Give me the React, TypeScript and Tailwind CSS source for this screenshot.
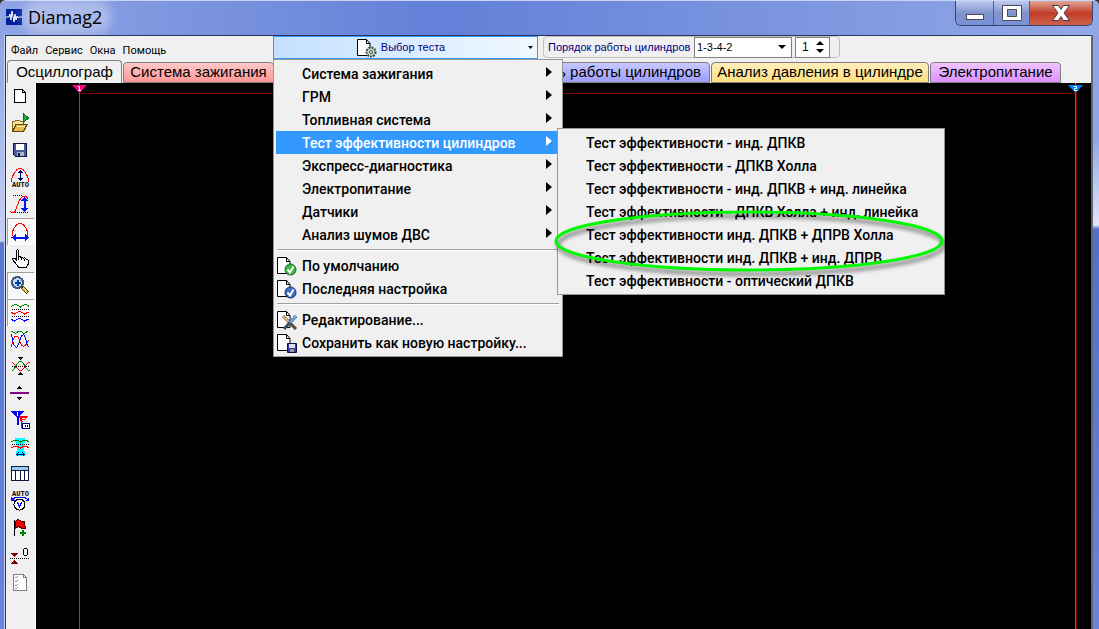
import { useState } from 'react';
import type { ReactNode } from 'react';

type Tool = {
  label: string;
  icon: ReactNode;
};

type MenuEntry = {
  label: string;
  icon?: ReactNode;
};

const Auto = ({ y }: { y: number }) => (
  <text x="13.5" y={y} textAnchor="middle" fontSize="7" fontWeight="700" fontFamily="Liberation Mono, monospace" fill="#000">AUTO</text>
);

const dots = { stroke: '#000', strokeDasharray: '1 1', fill: 'none' };

const tools: Tool[] = [
  {
    label: 'Новый',
    icon: <path d="M7.5 6.5h8l3 3v10h-11zM15.5 6.5v3h3" fill="#fff" stroke="#000" />,
  },
  {
    label: 'Открыть',
    icon: (
      <>
        <path d="M5.5 21V11.5h2l1-1h4l1 1h3V15" fill="#f5e6a0" stroke="#8a6914" />
        <path d="M5.5 21.5l3.5-7h11l-3.5 7z" fill="#e8b94a" stroke="#5c4a10" />
        <path d="M10 16h8" stroke="#fff3c0" />
        <path d="M16.5 3.5v9l5-4.5z" fill="#10b030" stroke="#06701a" />
      </>
    ),
  },
  {
    label: 'Сохранить',
    icon: (
      <>
        <path d="M6.5 6.5h13v13h-11l-2-2z" fill="#4a5a9c" stroke="#101838" />
        <path d="M9 7h8v6H9z" fill="#fff" />
        <path d="M10 15h7v4h-7z" fill="#aab4c8" />
        <path d="M11 16h2v3h-2z" fill="#101838" />
      </>
    ),
  },
  {
    label: 'Авто по вертикали',
    icon: (
      <>
        <path d="M4.5 17.5c0-5 3-9 5-11.5 2-2 5-2 7 0 2 2.500 5 6.500 5 11.500" fill="none" stroke="#f00" />
        <path d="M13.500 6v11" stroke="#00007f" />
        <path d="M11 9l2.500-3.500L16 9zM11 14l2.500 3.500L16 14z" fill="#00007f" />
        <Auto y={23} />
      </>
    ),
  },
  {
    label: 'Размах',
    icon: (
      <>
        <path d="M6 4.5h10M8 21.5h13" {...dots} />
        <path d="M3.5 20.5c2 2 4 2 5-1 2-5 3-10 6-13 2-2 5-2 7 2" fill="none" stroke="#f00" />
        <path d="M17.5 7v13" stroke="#0018f0" strokeWidth="2" />
        <path d="M14 10l3.5-4.5L21 10zM14 17l3.5 4.5L21 17z" fill="#0018f0" />
      </>
    ),
  },
  {
    label: 'Развёртка',
    icon: (
      <>
        <path d="M5 18c0-6 2-8 4-10.5 2-2.5 6-2.5 8 0 2 2.5 4 4.5 4 10.5" fill="none" stroke="#f00" />
        <path d="M6 19.5h15" stroke="#0018f0" strokeWidth="2" />
        <path d="M9 16l-4.5 3.5L9 23zM18 16l4.5 3.5L18 23z" fill="#0018f0" />
      </>
    ),
  },
  {
    label: 'Рука',
    icon: (
      <path d="M9.5 15V5.5q1-1.5 2 0V12q1.5-1 2.5.5 1.5-.8 2.5.7 2-.7 2.5 1 2-.5 2.5 1.5v3l-2 3.5h-8l-2.5-3.5-3.5-4q0-2 2-1.500zM11.5 12v3M14.5 13v2M17 13.5v2" fill="#fff" stroke="#000" />
    ),
  },
  {
    label: 'Лупа',
    icon: (
      <>
        <path d="M15 15l6 6" stroke="#4a3800" strokeWidth="4" />
        <path d="M16 16l4.5 4.5" stroke="#e8c860" strokeWidth="2" />
        <circle cx="10.5" cy="10.5" r="5.5" fill="#b8dcff" stroke="#4a5a78" strokeWidth="2" />
        <path d="M10.5 7.5v6M7.5 10.5h6" stroke="#0a3ca0" strokeWidth="2" />
      </>
    ),
  },
  {
    label: 'Раздельные каналы',
    icon: (
      <>
        <path d="M4.5 7.500l3-2h2l4 2.500 4-2.500h2l2.500 2" fill="none" stroke="#008000" />
        <path d="M5 10.5h17M5 17.5h17" {...dots} />
        <path d="M4.5 13.5l3 1.5 4-2.5h2l4 2.5 4-2" fill="none" stroke="#f00" />
        <path d="M4.5 20.5l3 1.5 4-2.5h2l4 2.5 4-2" fill="none" stroke="#00f" />
      </>
    ),
  },
  {
    label: 'Совмещённые каналы',
    icon: (
      <>
        <path d="M4.5 5l4 2.5 2.5-2h3l3 2 4-2.5" fill="none" stroke="#008000" />
        <path d="M4.5 21c1-7 3-11 5-11s3 5 4.5 8 4 4 7.5-4" fill="none" stroke="#f00" />
        <path d="M4.5 8c1 8 3 13 5 13s3-7 4.5-10 3-3 4 0 2 8 3.5 10" fill="none" stroke="#00f" />
      </>
    ),
  },
  {
    label: 'Центрировать',
    icon: (
      <>
        <path d="M10.5 4h6l-3 3zM10.5 22h6l-3-3z" fill="#000" />
        <path d="M4.5 17.5c4 0 5-9 9-9s5 9 9 9" fill="none" stroke="#008000" />
        <path d="M4.5 9.5c4 0 5 8 9 8s5-8 9-8" fill="none" stroke="#f00" />
        <path d="M5 13.5h17" {...dots} />
      </>
    ),
  },
  {
    label: 'Линия',
    icon: (
      <>
        <path d="M10 9h5l-2.5-3zM10 17h5l-2.5 3z" fill="#000" />
        <path d="M3 13h19" stroke="#800080" strokeWidth="2" />
      </>
    ),
  },
  {
    label: 'Маркеры',
    icon: (
      <>
        <path d="M12 9h9l-6 6v6h-1v-6z" fill="#f00" />
        <path d="M4 4h13l-5.5 6v8h-2v-8z" fill="#00f" />
        <path d="M10.500 5v4M15 11h3M15 13h2" stroke="#fff" />
        <path d="M15.5 16.5h7v5h-7z" fill="#fff" stroke="#00007f" />
        <path d="M18.5 18v2M20.5 18v2" stroke="#00007f" />
      </>
    ),
  },
  {
    label: 'Участок',
    icon: (
      <>
        <path d="M8 4h10v3l-1 5 1 10H9l1-10-2-5z" fill="#0ff" />
        <path d="M4.5 8l3-2h3l3 2 3-2h3l2 2" fill="none" stroke="#008000" />
        <path d="M5 10.5h17" {...dots} />
        <path d="M4.5 14l3-2h2l4 2 4-2h2l2 2" fill="none" stroke="#f00" />
        <path d="M10 20.5h7M11.5 18.5l-2 2 2 2M15.5 18.5l2 2-2 2" fill="none" stroke="#00007f" />
      </>
    ),
  },
  {
    label: 'Таблица',
    icon: (
      <>
        <path d="M4.5 5.5h17v14h-17z" fill="#fff" stroke="#10183c" />
        <path d="M5 6h16v3H5z" fill="#9cc8f4" />
        <path d="M5 9.5h16M8.5 9v10M13 9v10M17.5 9v10" stroke="#10183c" />
      </>
    ),
  },
  {
    label: 'Авто вольтметр',
    icon: (
      <>
        <Auto y={8} />
        <path d="M5 12c2-3 5-3 8-3s6 0 8 3" fill="none" stroke="#00f" />
        <path d="M4 9v4h4zM22 9v4h-4z" fill="#00f" />
        <circle cx="12.5" cy="16.5" r="5.5" fill="#fff" stroke="#000" />
        <path d="M10.5 14.5l2 4 2-4" fill="none" stroke="#00f" />
      </>
    ),
  },
  {
    label: 'Добавить флаг',
    icon: (
      <>
        <path d="M7.5 5v16" stroke="#000" />
        <path d="M8 6.5l3-2 3 1.5h3l1.5 7h-4l-3-1.5-3.5 2z" fill="#f00000" stroke="#500" />
        <path d="M16 15v6M13 18h6" stroke="#008000" strokeWidth="2" />
      </>
    ),
  },
  {
    label: 'Ноль',
    icon: (
      <>
        <path d="M4 11h7l-3.5 4zM4 22h7l-3.5-4z" fill="#800000" />
        <path d="M3 16.5h19" {...dots} />
        <rect x="16.5" y="6.5" width="4" height="7" rx="2" fill="none" stroke="#000" />
      </>
    ),
  },
  {
    label: 'Список',
    icon: (
      <>
        <path d="M6.5 5.5h10l3 3v13h-13zM16.5 5.5v3h3" fill="#fff" stroke="#808080" />
        <path d="M8 8l1 1 2-2M8 12l1 1 2-2M8 16l1 1 2-2M8 19l1 1 2-2" fill="none" stroke="#909090" />
      </>
    ),
  },
];

const pressedTools = ['Развёртка', 'Лупа', 'Раздельные каналы'];

const Page = ({ children }: { children: ReactNode }) => (
  <svg width="20" height="20" viewBox="0 0 20 20" className="shrink-0" aria-hidden="true">
    <path d="M.5 1.5h9l3.5 4v12H.5z" fill="#fff" stroke="#000" />
    <path d="M9.5 1.5v4H13" fill="none" stroke="#000" />
    {children}
  </svg>
);

const testMenu: MenuEntry[] = [
  { label: 'Система зажигания' },
  { label: 'ГРМ' },
  { label: 'Топливная система' },
  { label: 'Тест эффективности цилиндров' },
  { label: 'Экспресс-диагностика' },
  { label: 'Электропитание' },
  { label: 'Датчики' },
  { label: 'Анализ шумов ДВС' },
];

const presetMenu: MenuEntry[] = [
  {
    label: 'По умолчанию',
    icon: (
      <Page>
        <circle cx="13.5" cy="13.5" r="5.5" fill="#3cb83c" stroke="#20603a" />
        <path d="M10.5 13.5l2.5 3 3.5-6" fill="none" stroke="#fff" strokeWidth="2" />
      </Page>
    ),
  },
  {
    label: 'Последняя настройка',
    icon: (
      <Page>
        <circle cx="13.5" cy="13.5" r="5.5" fill="#3c70c8" stroke="#1c2c58" />
        <path d="M10.5 13.5l2.5 3 3.5-6" fill="none" stroke="#fff" strokeWidth="2" />
      </Page>
    ),
  },
];

const editMenu: MenuEntry[] = [
  {
    label: 'Редактирование...',
    icon: (
      <Page>
        <path d="M6 6l13 13" stroke="#5a4830" strokeWidth="3" />
        <path d="M6 6l6 6" stroke="#e0b878" strokeWidth="2" />
        <path d="M19 6L7 19" stroke="#38506c" strokeWidth="3" />
        <path d="M19 6l-6 6.5" stroke="#68b0f0" strokeWidth="2" />
      </Page>
    ),
  },
  {
    label: 'Сохранить как новую настройку...',
    icon: (
      <Page>
        <path d="M10.5 10.5h9v9h-9z" fill="#3c3ca0" stroke="#10103c" />
        <path d="M12 11h6v4h-6z" fill="#dde" />
        <path d="M13 16h4v3h-4z" fill="#99a" />
      </Page>
    ),
  },
];

const efficiencyTests = [
  'Тест эффективности - инд. ДПКВ',
  'Тест эффективности - ДПКВ Холла',
  'Тест эффективности - инд. ДПКВ + инд. линейка',
  'Тест эффективности - ДПКВ Холла + инд. линейка',
  'Тест эффективности инд. ДПКВ + ДПРВ Холла',
  'Тест эффективности инд. ДПКВ + инд. ДПРВ',
  'Тест эффективности - оптический ДПКВ',
];

const tabs = [
  { label: 'Система зажигания', style: 'from-[#ffc8c8] to-[#ff9696] w-[151px] justify-center' },
  { label: 'Неравномерность работы цилиндров', style: 'from-[#c8c8ff] to-[#9c9cfc] w-[435px] justify-end px-2' },
  { label: 'Анализ давления в цилиндре', style: 'from-[#ffeebc] to-[#ffdf80] w-[218px] justify-center' },
  { label: 'Электропитание', style: 'from-[#f0c4ff] to-[#dc90ff] w-[131px] justify-center' },
];

function Separator() {
  return <li role="separator" className="mx-px flex h-2 items-center"><div className="h-0.5 w-full border-t border-[#a0a0a0] bg-white"></div></li>;
}

function IconEntries({ entries }: { entries: MenuEntry[] }) {
  return entries.map((entry) => (
    <li key={entry.label}>
      <button type="button" className="flex h-[23px] w-full items-center gap-[5px] pl-px text-left">
        {entry.icon}
        {entry.label}
      </button>
    </li>
  ));
}

function SubMenu() {
  return (
    <div className="absolute -top-[3px] left-[281px] z-20 w-[388px] border border-[#979797] bg-[#f0f0f0] py-0.5 text-black">
      <ul>
        {efficiencyTests.map((test) => (
          <li key={test}>
            <button type="button" className="flex h-[23px] w-full items-center pl-7 text-left whitespace-nowrap">{test}</button>
          </li>
        ))}
      </ul>
      <svg width="404" height="76" viewBox="0 0 404 76" className="pointer-events-none absolute top-[75px] -left-2 drop-shadow-[2px_4px_2px_rgba(0,0,0,0.55)]" aria-hidden="true">
        <ellipse cx="199" cy="37" rx="193" ry="29" fill="none" stroke="#00f800" strokeWidth="3" />
      </svg>
    </div>
  );
}

function TestMenu() {
  const [selected, setSelected] = useState('Тест эффективности цилиндров');

  return (
    <ul className="absolute top-[23px] left-0 z-10 w-[290px] border border-[#979797] bg-[#f0f0f0] p-0.5 font-['Roboto',sans-serif] text-sm font-medium text-black">
      {testMenu.map((entry) => (
        <li key={entry.label} className="relative">
          <button
            type="button"
            onClick={() => setSelected(entry.label)}
            className={`flex h-[23px] w-full items-center justify-between pr-2 pl-[26px] text-left ${
              selected === entry.label ? 'bg-[#3399ff] text-white' : ''
            }`}
          >
            {entry.label}
            <svg width="6" height="10" viewBox="0 0 6 10" className="mb-1" aria-hidden="true"><path d="M0 0l6 5-6 5z" fill="currentColor" /></svg>
          </button>
          {selected === entry.label && <SubMenu />}
        </li>
      ))}
      <Separator />
      <IconEntries entries={presetMenu} />
      <Separator />
      <IconEntries entries={editMenu} />
    </ul>
  );
}

function TitleBar() {
  return (
    <header className="flex h-[35px] items-start justify-between rounded-t-md border-t border-[#c8d4f8] bg-linear-to-r from-[#8fa4e4] via-[#6280d8] via-40% to-[#93a8e6]">
      <div className="flex h-8 items-center gap-1.5 pl-1.5">
        <svg width="16" height="16" viewBox="0 0 16 16" aria-hidden="true">
          <path d="M0 0h16v16H0z" fill="#00209c" />
          <path d="M0 8h3l1-3 1 6 1-9 2 11 1-8 1 6 1-4 1 2 1-1h3" fill="none" stroke="#fff" />
        </svg>
        <h1 className="rounded-full bg-white/30 pr-1 font-['Open_Sans',sans-serif] text-lg leading-6 text-black shadow-[0_0_10px_6px_rgba(255,255,255,0.3)]">Diamag2</h1>
      </div>
      <div className="mr-1.5 flex h-[25px] overflow-hidden rounded-b-md border border-t-0 border-[#38446c]">
        <button type="button" aria-label="Свернуть" className="flex w-[38px] items-center justify-center border-r border-[#4c5c90] bg-linear-to-b from-[#c0ccf0] via-[#8094cc] via-50% to-[#7890d8]">
          <svg width="20" height="8" viewBox="0 0 20 8" className="mt-2" aria-hidden="true"><rect x="1.5" y="1.5" width="17" height="5" fill="#fff" stroke="#4a4a58" /></svg>
        </button>
        <button type="button" aria-label="Развернуть" className="flex w-9 items-center justify-center border-r border-[#4c5c90] bg-linear-to-b from-[#c0ccf0] via-[#8094cc] via-50% to-[#7890d8]">
          <svg width="20" height="16" viewBox="0 0 20 16" aria-hidden="true"><path d="M.5.5h19v15H.5zM5.5 4.5v7h9v-7z" fill="#fff" fillRule="evenodd" stroke="#4a4a58" /></svg>
        </button>
        <button type="button" aria-label="Закрыть" className="flex w-[62px] items-center justify-center bg-linear-to-b from-[#e0a498] from-0% via-[#c03c28] via-50% to-[#d06048]">
          <svg width="18" height="16" viewBox="0 0 18 16" aria-hidden="true"><path d="M.5.5h6L9 4.5l2.5-4h6L12 8l5.5 7.5h-6L9 11.5l-2.5 4h-6L6 8z" fill="#fff" stroke="#4a3c48" /></svg>
        </button>
      </div>
    </header>
  );
}

function TopBar() {
  return (
    <div className="flex h-6 bg-[#f0f0f0]">
      <nav className="flex w-[267px] shrink-0 items-end gap-[7px] pb-px pl-[5px] font-['Roboto',sans-serif] text-[11px] leading-4 text-black">
        <a href="#file">Файл</a>
        <a href="#service">Сервис</a>
        <a href="#windows">Окна</a>
        <a href="#help">Помощь</a>
      </nav>
      <div className="relative h-[23px] w-[265px] shrink-0">
        <button type="button" className="flex h-full w-full items-center border border-[#3399ff] bg-linear-to-r from-[#c4e0ff] to-[#f0f8ff] pr-1 font-['Liberation_Sans',sans-serif] text-[11px] text-[#000080]">
          <span className="flex flex-1 items-center justify-center gap-1">
            <Page>
              <circle cx="14" cy="14" r="4.5" fill="#c8d8c8" stroke="#405040" strokeWidth="2" strokeDasharray="2 1" />
              <circle cx="14" cy="14" r="1.5" fill="#fff" stroke="#405040" />
            </Page>
            Выбор теста
          </span>
          <svg width="5" height="3" viewBox="0 0 5 3" aria-hidden="true"><path d="M0 0h5L2.5 3z" /></svg>
        </button>
        <TestMenu />
      </div>
      <div className="ml-[5px] flex h-[22px] w-[297px] items-center rounded-sm border border-[#c0c0c0] pl-1 font-['Liberation_Sans',sans-serif] text-[11px] text-[#000080]">
        <label htmlFor="firing-order" className="w-[146px] shrink-0 whitespace-nowrap">Порядок работы цилиндров</label>
        <div className="relative">
          <select id="firing-order" className="block h-[21px] w-[98px] appearance-none border border-[#808080] bg-white pl-0.5 text-[11px] text-black">
            <option>1-3-4-2</option>
            <option>1-2-4-3</option>
          </select>
          <svg width="8" height="4" viewBox="0 0 8 4" className="pointer-events-none absolute top-2 right-1.5" aria-hidden="true"><path d="M0 0h8L4 4z" fill="#000" /></svg>
        </div>
        <div className="ml-[3px] flex h-[21px] w-[35px] items-center border border-[#808080] bg-white">
          <input aria-label="Цилиндр" inputMode="numeric" defaultValue="1" className="w-5 pl-1.5 text-xs text-black" />
          <div className="flex flex-col gap-1">
            <button type="button" aria-label="Больше" className="block"><svg width="8" height="4" viewBox="0 0 8 4"><path d="M0 4h8L4 0z" fill="#000" /></svg></button>
            <button type="button" aria-label="Меньше" className="block"><svg width="8" height="4" viewBox="0 0 8 4"><path d="M0 0h8L4 4z" fill="#000" /></svg></button>
          </div>
        </div>
      </div>
    </div>
  );
}

function TabBar() {
  return (
    <div role="tablist" className="flex h-[23px] items-end gap-px overflow-hidden bg-[#f0f0f0] pl-px font-['Liberation_Sans',sans-serif] text-[15px] text-black">
      <button type="button" role="tab" aria-selected="true" className="flex h-[23px] w-[115px] shrink-0 items-center justify-center rounded-t border border-b-0 border-[#808080]">Осциллограф</button>
      {tabs.map((tab) => (
        <button
          key={tab.label}
          type="button"
          role="tab"
          aria-selected="false"
          className={`flex h-[21px] shrink-0 items-center rounded-t border border-[#808080] bg-linear-to-b whitespace-nowrap ${tab.style}`}
        >
          {tab.label}
        </button>
      ))}
    </div>
  );
}

function ToolBar() {
  return (
    <div role="toolbar" className="flex w-[30px] shrink-0 flex-col items-start border-r border-white bg-[#f0f0f0] pl-px">
      {tools.map((tool) => (
        <button
          key={tool.label}
          type="button"
          aria-label={tool.label}
          className={`h-[27px] w-[27px] ${
            pressedTools.includes(tool.label) ? 'bg-[#f8f8f8] shadow-[inset_1px_1px_0_#a0a0a0,inset_-1px_-1px_0_#ffffff]' : ''
          }`}
        >
          <svg width="27" height="27" viewBox="0 0 27 27" shapeRendering="crispEdges" aria-hidden="true">{tool.icon}</svg>
        </button>
      ))}
    </div>
  );
}

function Plot() {
  return (
    <main className="relative flex-1 bg-black">
      <div className="absolute top-2.5 right-4 left-[43px] h-px bg-[#800000]"></div>
      <div className="absolute inset-y-0 left-[43px] w-px bg-[#ff007f]"></div>
      <div className="absolute inset-y-0 right-3.5 w-0.5 border-l border-[#0080ff] bg-[#800000]"></div>
      <svg width="15" height="8" viewBox="0 0 15 8" className="absolute top-0.5 left-9" aria-hidden="true">
        <path d="M0 0h15L7.5 8z" fill="#ff007f" />
        <path d="M6 1.5h1.5v4M6 5.5h3" fill="none" stroke="#fff" />
      </svg>
      <svg width="15" height="8" viewBox="0 0 15 8" className="absolute top-0.5 right-2" aria-hidden="true">
        <path d="M0 0h15L7.5 8z" fill="#0080ff" />
        <path d="M5.5 1.5h3v2h-2v2h3" fill="none" stroke="#fff" />
      </svg>
    </main>
  );
}

export default function App() {
  return (
    <div className="flex min-h-screen flex-col overflow-hidden bg-[#303030]">
      <TitleBar />
      <div className="flex flex-1">
        <div className="w-[5px] shrink-0 border-r border-[#c8d4f4] bg-[linear-gradient(to_bottom,#8ea4e4_0,#c4d0f4_206px,#5878d4_208px,#6884dc_100%)]"></div>
        <div className="flex min-w-0 flex-1 flex-col border-t border-l border-[#283458]">
          <TopBar />
          <TabBar />
          <div className="flex flex-1">
            <ToolBar />
            <Plot />
          </div>
        </div>
        <div className="w-2 shrink-0 border-l-2 border-[#606878] bg-[linear-gradient(to_bottom,#8ea4e4_0,#8ea4e4_100px,#e0e6fa_190px,#5070cc_194px,#6884dc_100%)]"></div>
      </div>
    </div>
  );
}
